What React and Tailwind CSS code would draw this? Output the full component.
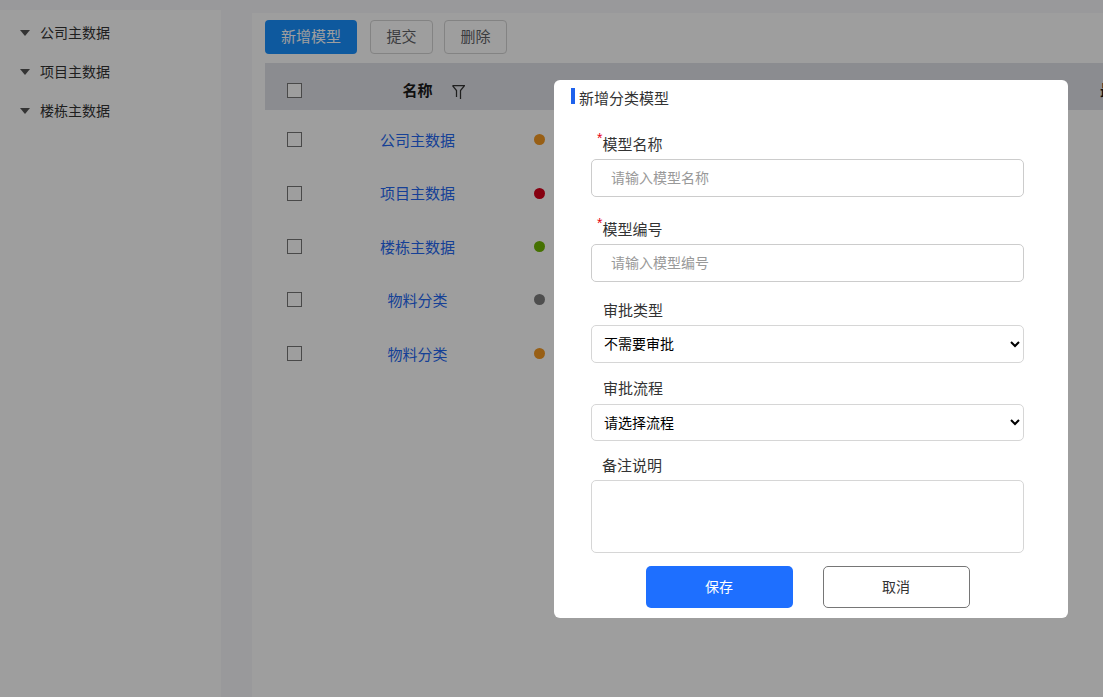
import { useState } from "react";

const treeItems = ["公司主数据", "项目主数据", "楼栋主数据"];

const initialModels = [
    { id: 1, name: "公司主数据", color: "bg-[#f59a23]" },
    { id: 2, name: "项目主数据", color: "bg-[#d9001b]" },
    { id: 3, name: "楼栋主数据", color: "bg-[#70b603]" },
    { id: 4, name: "物料分类", color: "bg-[#7f7f7f]" },
    { id: 5, name: "物料分类", color: "bg-[#f59a23]" },
];

function Sidebar() {
    return (
        <aside className="mt-[10px] w-[221px] shrink-0 bg-white pt-[3px] text-sm text-[#333]">
            <ul>
                {treeItems.map((item) => (
                    <li key={item} className="flex h-[39px] items-center">
                        <button type="button" className="flex items-center gap-[10px] pl-5">
                            <svg width="10" height="6" viewBox="0 0 10 6" fill="#555">
                                <path d="M0 0h10L5 6z" />
                            </svg>
                            {item}
                        </button>
                    </li>
                ))}
            </ul>
        </aside>
    );
}

function Checkbox({ label }) {
    return (
        <input
            type="checkbox"
            aria-label={label}
            className="block size-[15px] mx-auto appearance-none border border-[#767676] bg-white checked:bg-[#1890ff]"
        />
    );
}

function ModelTable({ models }) {
    return (
        <table className="h-[314px] w-[1100px] table-fixed text-[15px]">
            <colgroup>
                <col className="w-[59px]" />
                <col className="w-[187px]" />
                <col className="w-[570px]" />
                <col />
            </colgroup>
            <thead>
                <tr className="h-[47px] bg-[#e0e2e8] text-[#1a1a1a]">
                    <th className="pt-[7px]">
                        <Checkbox label="全选" />
                    </th>
                    <th className="relative pt-[9px] font-bold">
                        名称
                        <svg
                            className="absolute left-32 top-[22px]"
                            width="13"
                            height="14"
                            viewBox="0 0 13 14"
                            fill="none"
                            stroke="#333"
                            strokeWidth="1.25"
                        >
                            <path d="M0.5 0.6h12L8.5 5.5v8.5M0.5 0.6L4.5 5.5v6.5" />
                        </svg>
                    </th>
                    <th></th>
                    <th className="pl-[19px] pt-[9px] text-left font-bold">最</th>
                </tr>
            </thead>
            <tbody>
                {models.map((model) => (
                    <tr key={model.id}>
                        <td className="pt-[6px]">
                            <Checkbox label={model.name} />
                        </td>
                        <td className="pt-[9px] text-center">
                            <a href="#" className="text-[#2468f2]">
                                {model.name}
                            </a>
                        </td>
                        <td className="pl-[23px] pt-[6px]">
                            <span className={`block size-[11px] rounded-full ${model.color}`}></span>
                        </td>
                        <td></td>
                    </tr>
                ))}
            </tbody>
        </table>
    );
}

function ModelDialog({ onClose }) {
    const [form, setForm] = useState({ name: "", code: "", type: "none", flow: "", remark: "" });

    const handleChange = (e) => {
        setForm({ ...form, [e.target.name]: e.target.value });
    };

    const handleSubmit = (e) => {
        e.preventDefault();
        onClose();
    };

    return (
        <div className="fixed inset-0 flex items-start justify-end bg-black/38 pr-[35px] pt-20">
            <div role="dialog" aria-labelledby="dialog-title" className="w-[514px] rounded-md bg-white pb-[10px] pt-2 text-[#333]">
                <div className="flex items-start gap-1 pl-[17px]">
                    <span className="h-4 w-1 bg-[#1e62ec]"></span>
                    <h2 id="dialog-title" className="text-[15px] leading-[22px]">
                        新增分类模型
                    </h2>
                </div>
                <form onSubmit={handleSubmit} className="flex flex-col pl-[37px] pr-11 pt-6 text-sm">
                    <label htmlFor="name" className="pl-[6px] text-[15px] leading-[22px]">
                        <sup className="text-sm text-[#e60012]">*</sup>模型名称
                    </label>
                    <input
                        type="text"
                        id="name"
                        name="name"
                        value={form.name}
                        placeholder="请输入模型名称"
                        className="mt-[3px] h-[38px] rounded-[5px] border border-[#ccc] px-[19px] placeholder:text-[#999]"
                        onChange={handleChange}
                    />
                    <label htmlFor="code" className="mt-[22px] pl-[6px] text-[15px] leading-[22px]">
                        <sup className="text-sm text-[#e60012]">*</sup>模型编号
                    </label>
                    <input
                        type="text"
                        id="code"
                        name="code"
                        value={form.code}
                        placeholder="请输入模型编号"
                        className="mt-[3px] h-[38px] rounded-[5px] border border-[#ccc] px-[19px] placeholder:text-[#999]"
                        onChange={handleChange}
                    />
                    <label htmlFor="type" className="mt-[18px] pl-3 text-[15px] leading-[22px]">
                        审批类型
                    </label>
                    <select
                        id="type"
                        name="type"
                        value={form.type}
                        className="mt-[3px] h-[38px] rounded-[5px] border border-[#d6d6d6] bg-white pl-2 pr-[3px] text-black"
                        onChange={handleChange}
                    >
                        <option value="none">不需要审批</option>
                    </select>
                    <label htmlFor="flow" className="mt-[15px] pl-3 text-[15px] leading-[22px]">
                        审批流程
                    </label>
                    <select
                        id="flow"
                        name="flow"
                        value={form.flow}
                        className="mt-1 h-[37px] rounded-[5px] border border-[#d6d6d6] bg-white pl-2 pr-[3px] text-black"
                        onChange={handleChange}
                    >
                        <option value="">请选择流程</option>
                    </select>
                    <label htmlFor="remark" className="mt-[14px] pl-[11px] text-[15px] leading-[22px]">
                        备注说明
                    </label>
                    <textarea
                        id="remark"
                        name="remark"
                        value={form.remark}
                        className="mt-[3px] h-[73px] resize-none rounded-[5px] border border-[#d6d6d6] p-2"
                        onChange={handleChange}
                    />
                    <div className="mt-[13px] flex justify-center gap-[30px]">
                        <button type="submit" className="h-[42px] w-[147px] rounded-[5px] bg-[#1e6fff] text-white">
                            保存
                        </button>
                        <button
                            type="button"
                            className="h-[42px] w-[147px] rounded-[5px] border border-[#767676] bg-white"
                            onClick={onClose}
                        >
                            取消
                        </button>
                    </div>
                </form>
            </div>
        </div>
    );
}

function App() {
    const [open, setOpen] = useState(true);

    return (
        <div className="flex min-h-screen bg-[#f7f7fb] font-['Liberation_Sans','Noto_Sans_CJK_SC',sans-serif]">
            <Sidebar />
            <main className="ml-[31px] mt-[13px] min-w-0 flex-1 overflow-hidden bg-white pl-[13px] pt-[7px]">
                <div className="mb-[9px] flex text-[15px] text-[#606266]">
                    <button
                        type="button"
                        className="h-[34px] w-[92px] rounded bg-[#1890ff] text-white"
                        onClick={() => setOpen(true)}
                    >
                        新增模型
                    </button>
                    <button type="button" className="ml-[13px] h-[34px] w-[63px] rounded border border-[#d4d4d4]">
                        提交
                    </button>
                    <button type="button" className="ml-[11px] h-[34px] w-[63px] rounded border border-[#d4d4d4]">
                        删除
                    </button>
                </div>
                <ModelTable models={initialModels} />
            </main>
            {open && <ModelDialog onClose={() => setOpen(false)} />}
        </div>
    );
}

export default App;
